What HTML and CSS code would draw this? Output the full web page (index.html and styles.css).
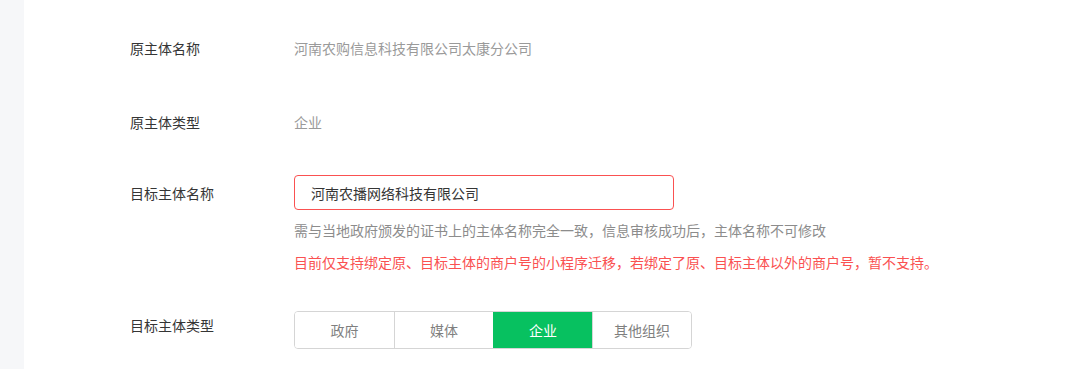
FILE: index.html
```html
<!DOCTYPE html>
<html lang="zh-CN">
<head>
    <meta charset="UTF-8">
    <meta name="viewport" content="width=device-width, initial-scale=1.0">
    <title>主体迁移</title>
    <link rel="stylesheet" href="styles.css">
</head>
<body>
    <div class="page">
        <div class="sidebar"></div>
        <div class="main">
            <div class="form-row row-origin-name">
                <div class="label">原主体名称</div>
                <div class="value">河南农购信息科技有限公司太康分公司</div>
            </div>

            <div class="form-row row-origin-type">
                <div class="label">原主体类型</div>
                <div class="value">企业</div>
            </div>

            <div class="form-row row-target-name">
                <div class="label label-input">目标主体名称</div>
                <div class="field">
                    <input class="text-input is-error" type="text" value="河南农播网络科技有限公司">
                    <p class="hint">需与当地政府颁发的证书上的主体名称完全一致，信息审核成功后，主体名称不可修改</p>
                    <p class="warn">目前仅支持绑定原、目标主体的商户号的小程序迁移，若绑定了原、目标主体以外的商户号，暂不支持。</p>
                </div>
            </div>

            <div class="form-row row-target-type">
                <div class="label label-seg">目标主体类型</div>
                <div class="segmented">
                    <button class="seg-item">政府</button>
                    <button class="seg-item">媒体</button>
                    <button class="seg-item active">企业</button>
                    <button class="seg-item">其他组织</button>
                </div>
            </div>
        </div>
    </div>
</body>
</html>
```

FILE: styles.css
```css
* {
    box-sizing: border-box;
}
html, body {
    margin: 0;
    padding: 0;
    height: 100%;
}
body {
    font-family: "Noto Sans CJK SC", "Liberation Sans", sans-serif;
    font-size: 14px;
    color: #353535;
    background-color: #fff;
    overflow: hidden;
}
.page {
    display: flex;
    height: 100%;
}
.sidebar {
    width: 24px;
    flex-shrink: 0;
    background-color: #f6f7f9;
}
.main {
    flex: 1;
    padding-left: 106px;
    padding-top: 38px;
}
.form-row {
    display: flex;
    align-items: flex-start;
}
.label {
    width: 164px;
    flex-shrink: 0;
    line-height: 20px;
    color: #353535;
}
.value {
    line-height: 20px;
    color: #9a9a9a;
}
.row-origin-type {
    margin-top: 54px;
}
.row-target-name {
    margin-top: 43px;
}
.label-input {
    padding-top: 8px;
}
.field {
    display: flex;
    flex-direction: column;
}
.text-input {
    width: 380px;
    height: 35px;
    padding: 0 16px;
    border: 1px solid #d9d9d9;
    border-radius: 4px;
    font-family: inherit;
    font-size: 14px;
    color: #353535;
    outline: none;
}
.text-input.is-error {
    border-color: #fa5151;
}
.hint,
.warn {
    margin: 0;
    line-height: 20px;
    font-size: 14px;
}
.hint {
    margin-top: 10px;
    color: #8c8c8c;
}
.warn {
    margin-top: 12px;
    color: #fa5151;
}
.row-target-type {
    margin-top: 39px;
}
.label-seg {
    padding-top: 4px;
}
.segmented {
    display: flex;
    border: 1px solid #d5d5d5;
    border-radius: 4px;
    overflow: hidden;
}
.seg-item {
    width: 99px;
    height: 36px;
    border: 0;
    border-left: 1px solid #d5d5d5;
    background-color: #fff;
    font-family: inherit;
    font-size: 14px;
    color: #7f7f7f;
    padding: 0;
}
.seg-item:first-child {
    border-left: 0;
}
.seg-item.active {
    background-color: #07c160;
    border-left-color: #07c160;
    color: #fff;
}
```
